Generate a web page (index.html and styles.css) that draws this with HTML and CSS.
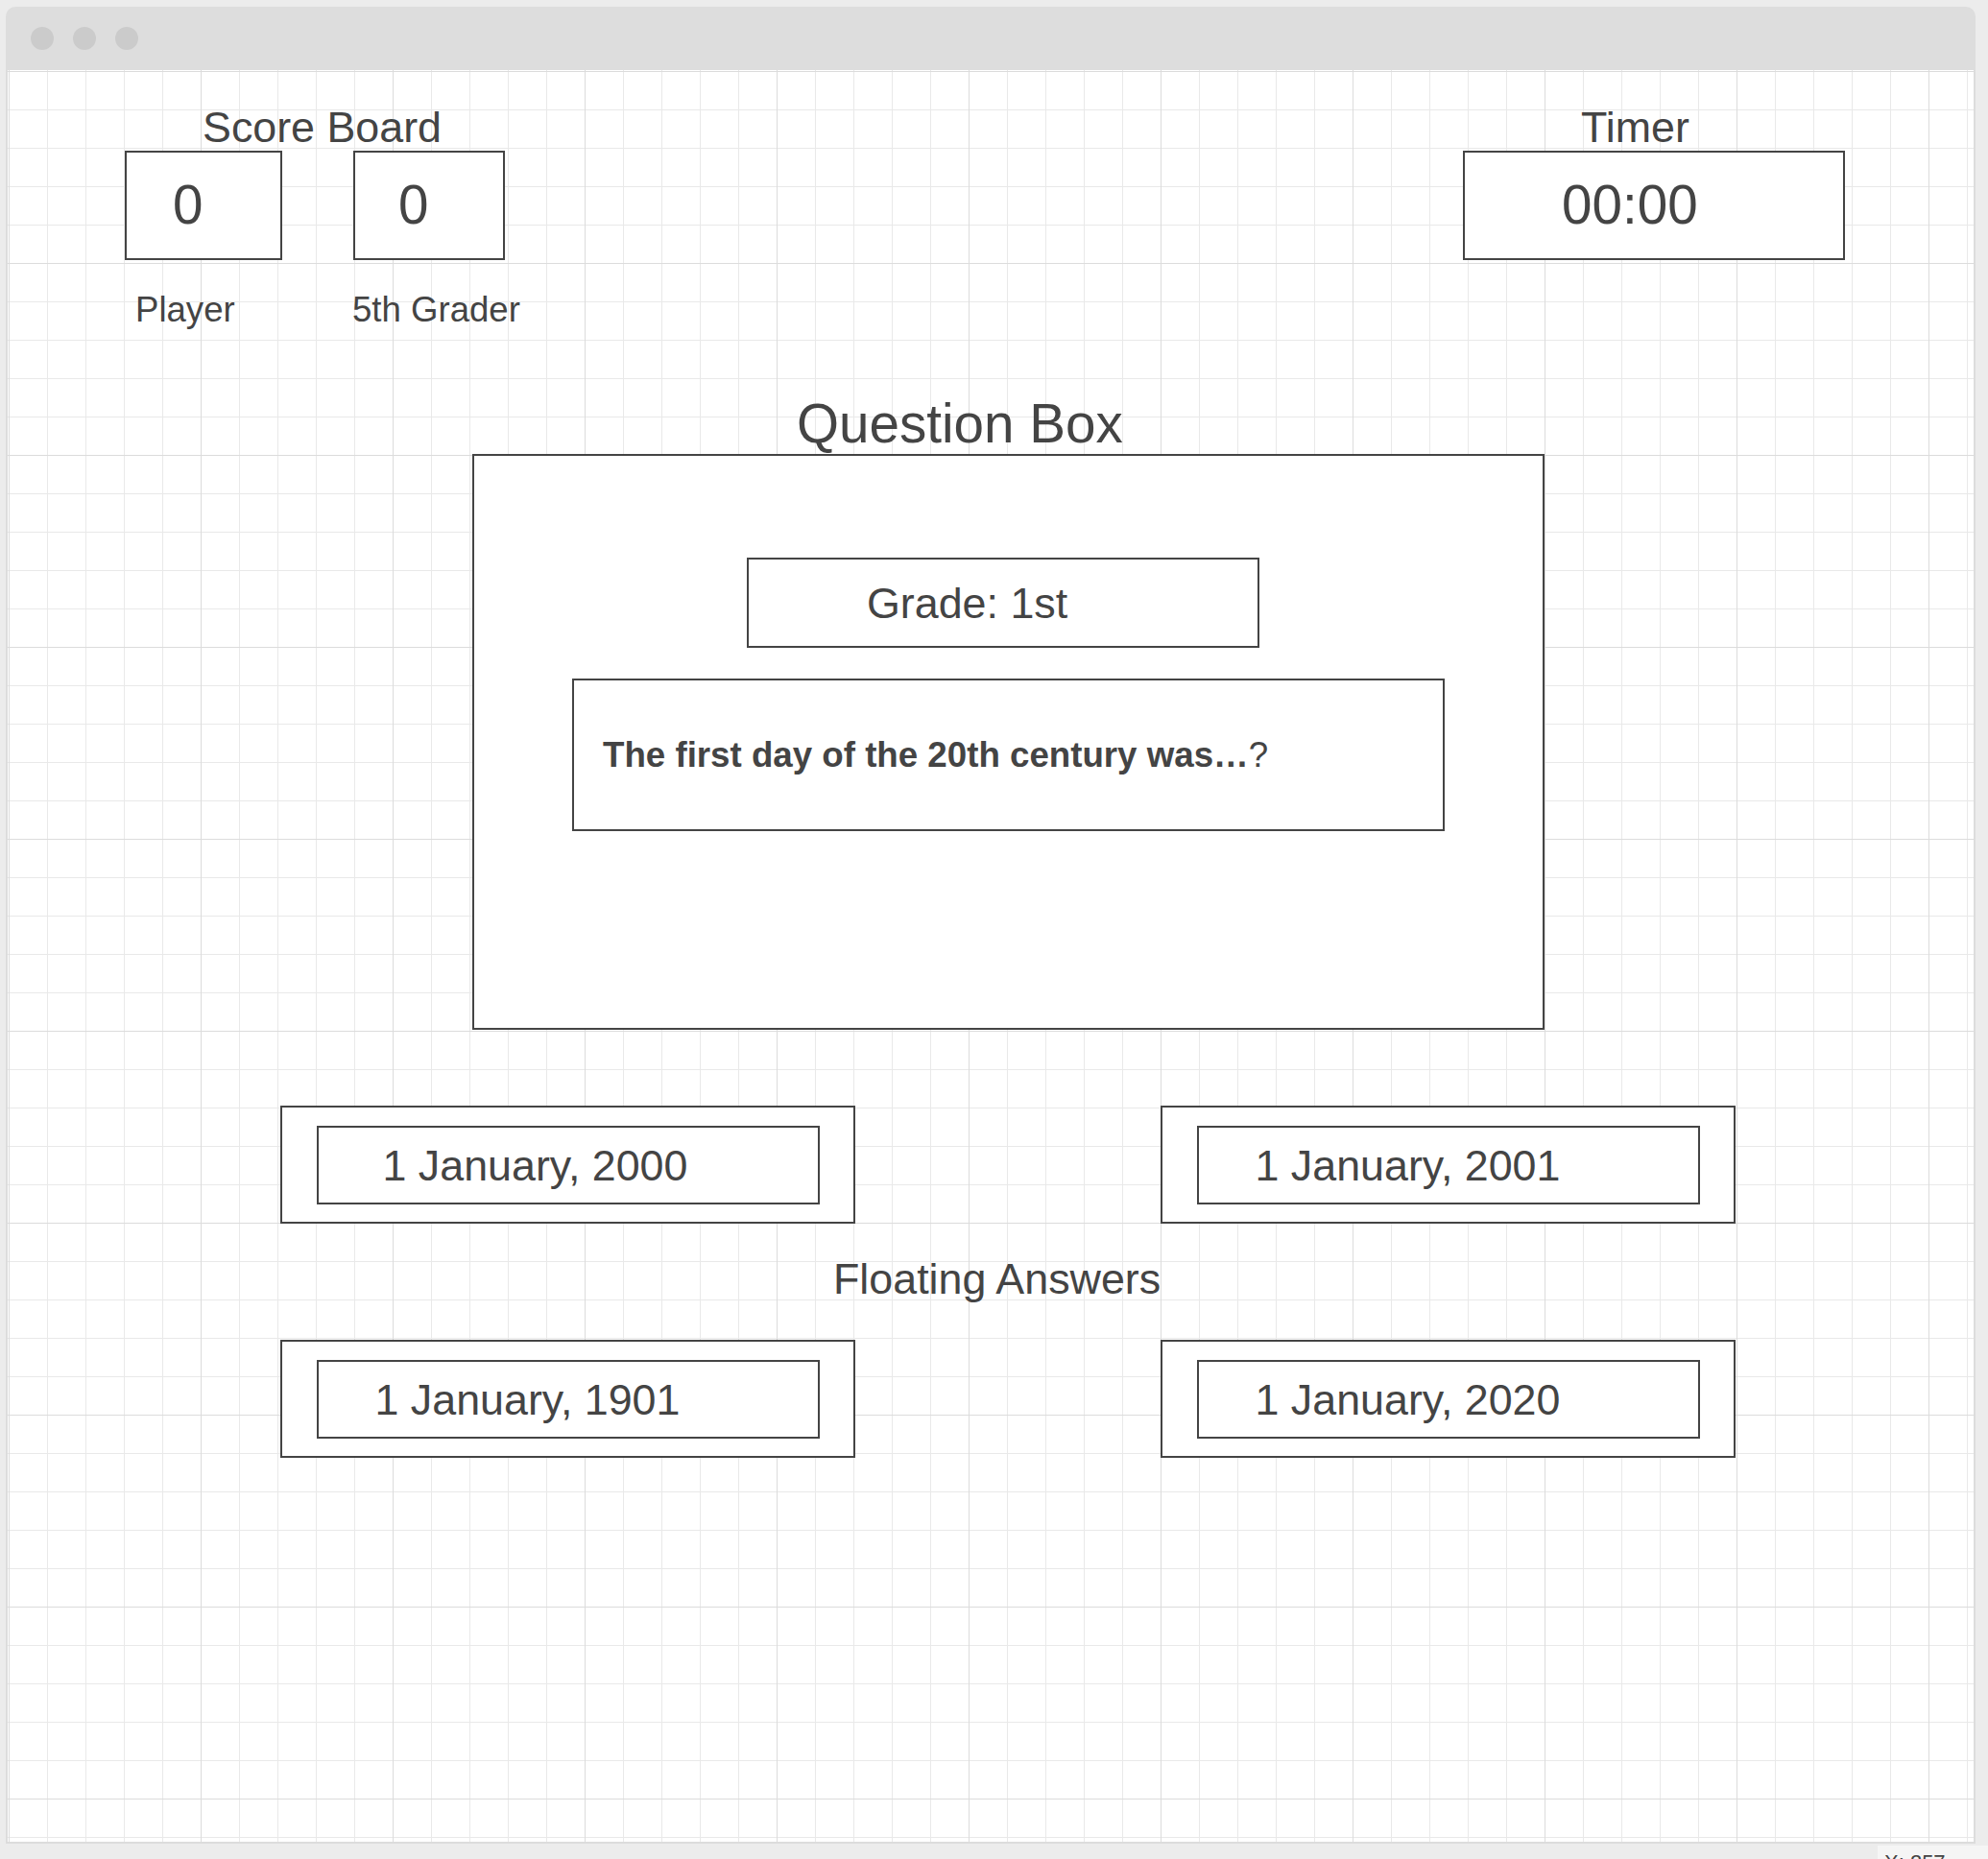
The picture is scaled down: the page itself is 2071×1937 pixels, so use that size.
FILE: index.html
```html
<!DOCTYPE html>
<html lang="en">
<head>
<meta charset="utf-8">
<title>5th Grader Quiz Wireframe</title>
<link rel="stylesheet" href="styles.css">
</head>
<body>
<div class="window">
  <div class="titlebar">
    <span class="dot"></span>
    <span class="dot"></span>
    <span class="dot"></span>
  </div>
  <div class="canvas">
    <section class="top">
      <div class="scoreboard">
        <div class="label-lg sb-title">Score Board</div>
        <div class="scores">
          <div class="score-col">
            <div class="box score-box score-box--player"><span class="num">0</span></div>
            <div class="label-sm player-label">Player</div>
          </div>
          <div class="score-col">
            <div class="box score-box score-box--grader"><span class="num">0</span></div>
            <div class="label-sm grader-label">5th Grader</div>
          </div>
        </div>
      </div>
      <div class="timer">
        <div class="label-lg timer-title">Timer</div>
        <div class="box timer-box"><span class="num">00:00</span></div>
      </div>
    </section>

    <section class="question">
      <div class="question-title">Question Box</div>
      <div class="box question-box">
        <div class="box grade-box">Grade: 1st</div>
        <div class="box question-text"><strong>The first day of the 20th century was…</strong>?</div>
      </div>
    </section>

    <section class="answers">
      <div class="answer-row">
        <div class="box answer"><div class="box answer-inner answer-inner--wide">1 January, 2000</div></div>
        <div class="box answer"><div class="box answer-inner">1 January, 2001</div></div>
      </div>
      <div class="answers-title">Floating Answers</div>
      <div class="answer-row">
        <div class="box answer"><div class="box answer-inner">1 January, 1901</div></div>
        <div class="box answer"><div class="box answer-inner">1 January, 2020</div></div>
      </div>
    </section>
  </div>
</div>
<div class="statusbar">
  <div class="coords">X: 257</div>
</div>
</body>
</html>
```

FILE: styles.css
```css
html, body {
  margin: 0;
  padding: 0;
  overflow: hidden;
}

body {
  background: #ececec;
  font-family: "Liberation Sans", Arial, sans-serif;
  color: #444444;
}

.window {
  margin: 7px 0 0 6px;
  width: 2052px;
}

.titlebar {
  height: 66px;
  background: #dddddd;
  border-radius: 10px 10px 0 0;
  display: flex;
  align-items: center;
  gap: 20px;
  padding-left: 26px;
  box-sizing: border-box;
}

.dot {
  width: 24px;
  height: 24px;
  border-radius: 50%;
  background: #cbcbcb;
}

.canvas {
  width: 2048px;
  height: 1846px;
  border: 2px solid #dcdcdc;
  border-top: 0;
  background-color: #ffffff;
  background-image:
    linear-gradient(to right, #dcdcdc 1px, transparent 1px),
    linear-gradient(to bottom, #dcdcdc 1px, transparent 1px),
    linear-gradient(to right, #e9e9e9 1px, transparent 1px),
    linear-gradient(to bottom, #e9e9e9 1px, transparent 1px);
  background-size: 200px 200px, 200px 200px, 40px 40px, 40px 40px;
  background-position: 1px 1px;
}

.box {
  box-sizing: border-box;
  border: 2px solid #444444;
  background: #ffffff;
}

.label-lg {
  font-size: 44.8px;
  line-height: 44px;
}

.label-sm {
  font-size: 36.6px;
  line-height: 36px;
  margin-top: 34px;
}

.num {
  font-size: 56.6px;
  line-height: 56px;
}

/* ---------- top row ---------- */
.top {
  display: flex;
  align-items: flex-start;
  padding-top: 37px;
}

.scoreboard {
  margin-left: 122px;
}

.sb-title {
  margin-left: 81px;
}

.scores {
  display: flex;
  gap: 74px;
  margin-top: 3px;
}

.score-box {
  height: 114px;
  display: flex;
  align-items: center;
}

.score-box--player {
  width: 164px;
  padding-left: 48px;
}

.score-box--grader {
  width: 158px;
  padding-left: 45px;
}

.player-label {
  margin-left: 11px;
}

.grader-label {
  margin-left: -1px;
}

.timer {
  margin-left: auto;
  margin-right: 134px;
}

.timer-title {
  margin-left: 123px;
}

.timer-box {
  width: 398px;
  height: 114px;
  margin-top: 3px;
  display: flex;
  align-items: center;
  padding-left: 101px;
}

/* ---------- question ---------- */
.question {
  margin-top: 73px;
}

.question-title {
  margin-left: 822px;
  font-size: 56.6px;
  line-height: 56px;
}

.question-box {
  margin: 3px 0 0 484px;
  width: 1117px;
  height: 600px;
  padding-top: 106px;
}

.grade-box {
  margin-left: 284px;
  width: 534px;
  height: 94px;
  padding-left: 123px;
  display: flex;
  align-items: center;
  font-size: 44.8px;
  line-height: 44px;
}

.question-text {
  margin: 32px 0 0 102px;
  width: 909px;
  height: 159px;
  padding-left: 30px;
  display: flex;
  align-items: center;
  font-size: 36.7px;
  line-height: 36px;
}

.question-text strong {
  font-weight: 700;
}

/* ---------- answers ---------- */
.answers {
  margin-top: 79px;
}

.answer-row {
  display: flex;
  gap: 318px;
  margin-left: 284px;
}

.answer {
  width: 599px;
  height: 123px;
  display: flex;
  align-items: center;
  justify-content: center;
}

.answer-inner {
  width: 524px;
  height: 82px;
  display: flex;
  align-items: center;
  padding-left: 59px;
  font-size: 44.8px;
  line-height: 44px;
}

.answer-inner--wide {
  padding-left: 67px;
}

.answers-title {
  margin: 35px 0 42px 860px;
  font-size: 44.8px;
  line-height: 44px;
}

/* ---------- status bar ---------- */
.statusbar {
  display: flex;
  justify-content: flex-end;
  margin-top: 2px;
}

.coords {
  width: 115px;
  height: 40px;
  box-sizing: border-box;
  background: #f5f5f5;
  padding: 7px 0 0 7px;
  font-size: 22px;
  line-height: 22px;
  color: #444444;
}
```
